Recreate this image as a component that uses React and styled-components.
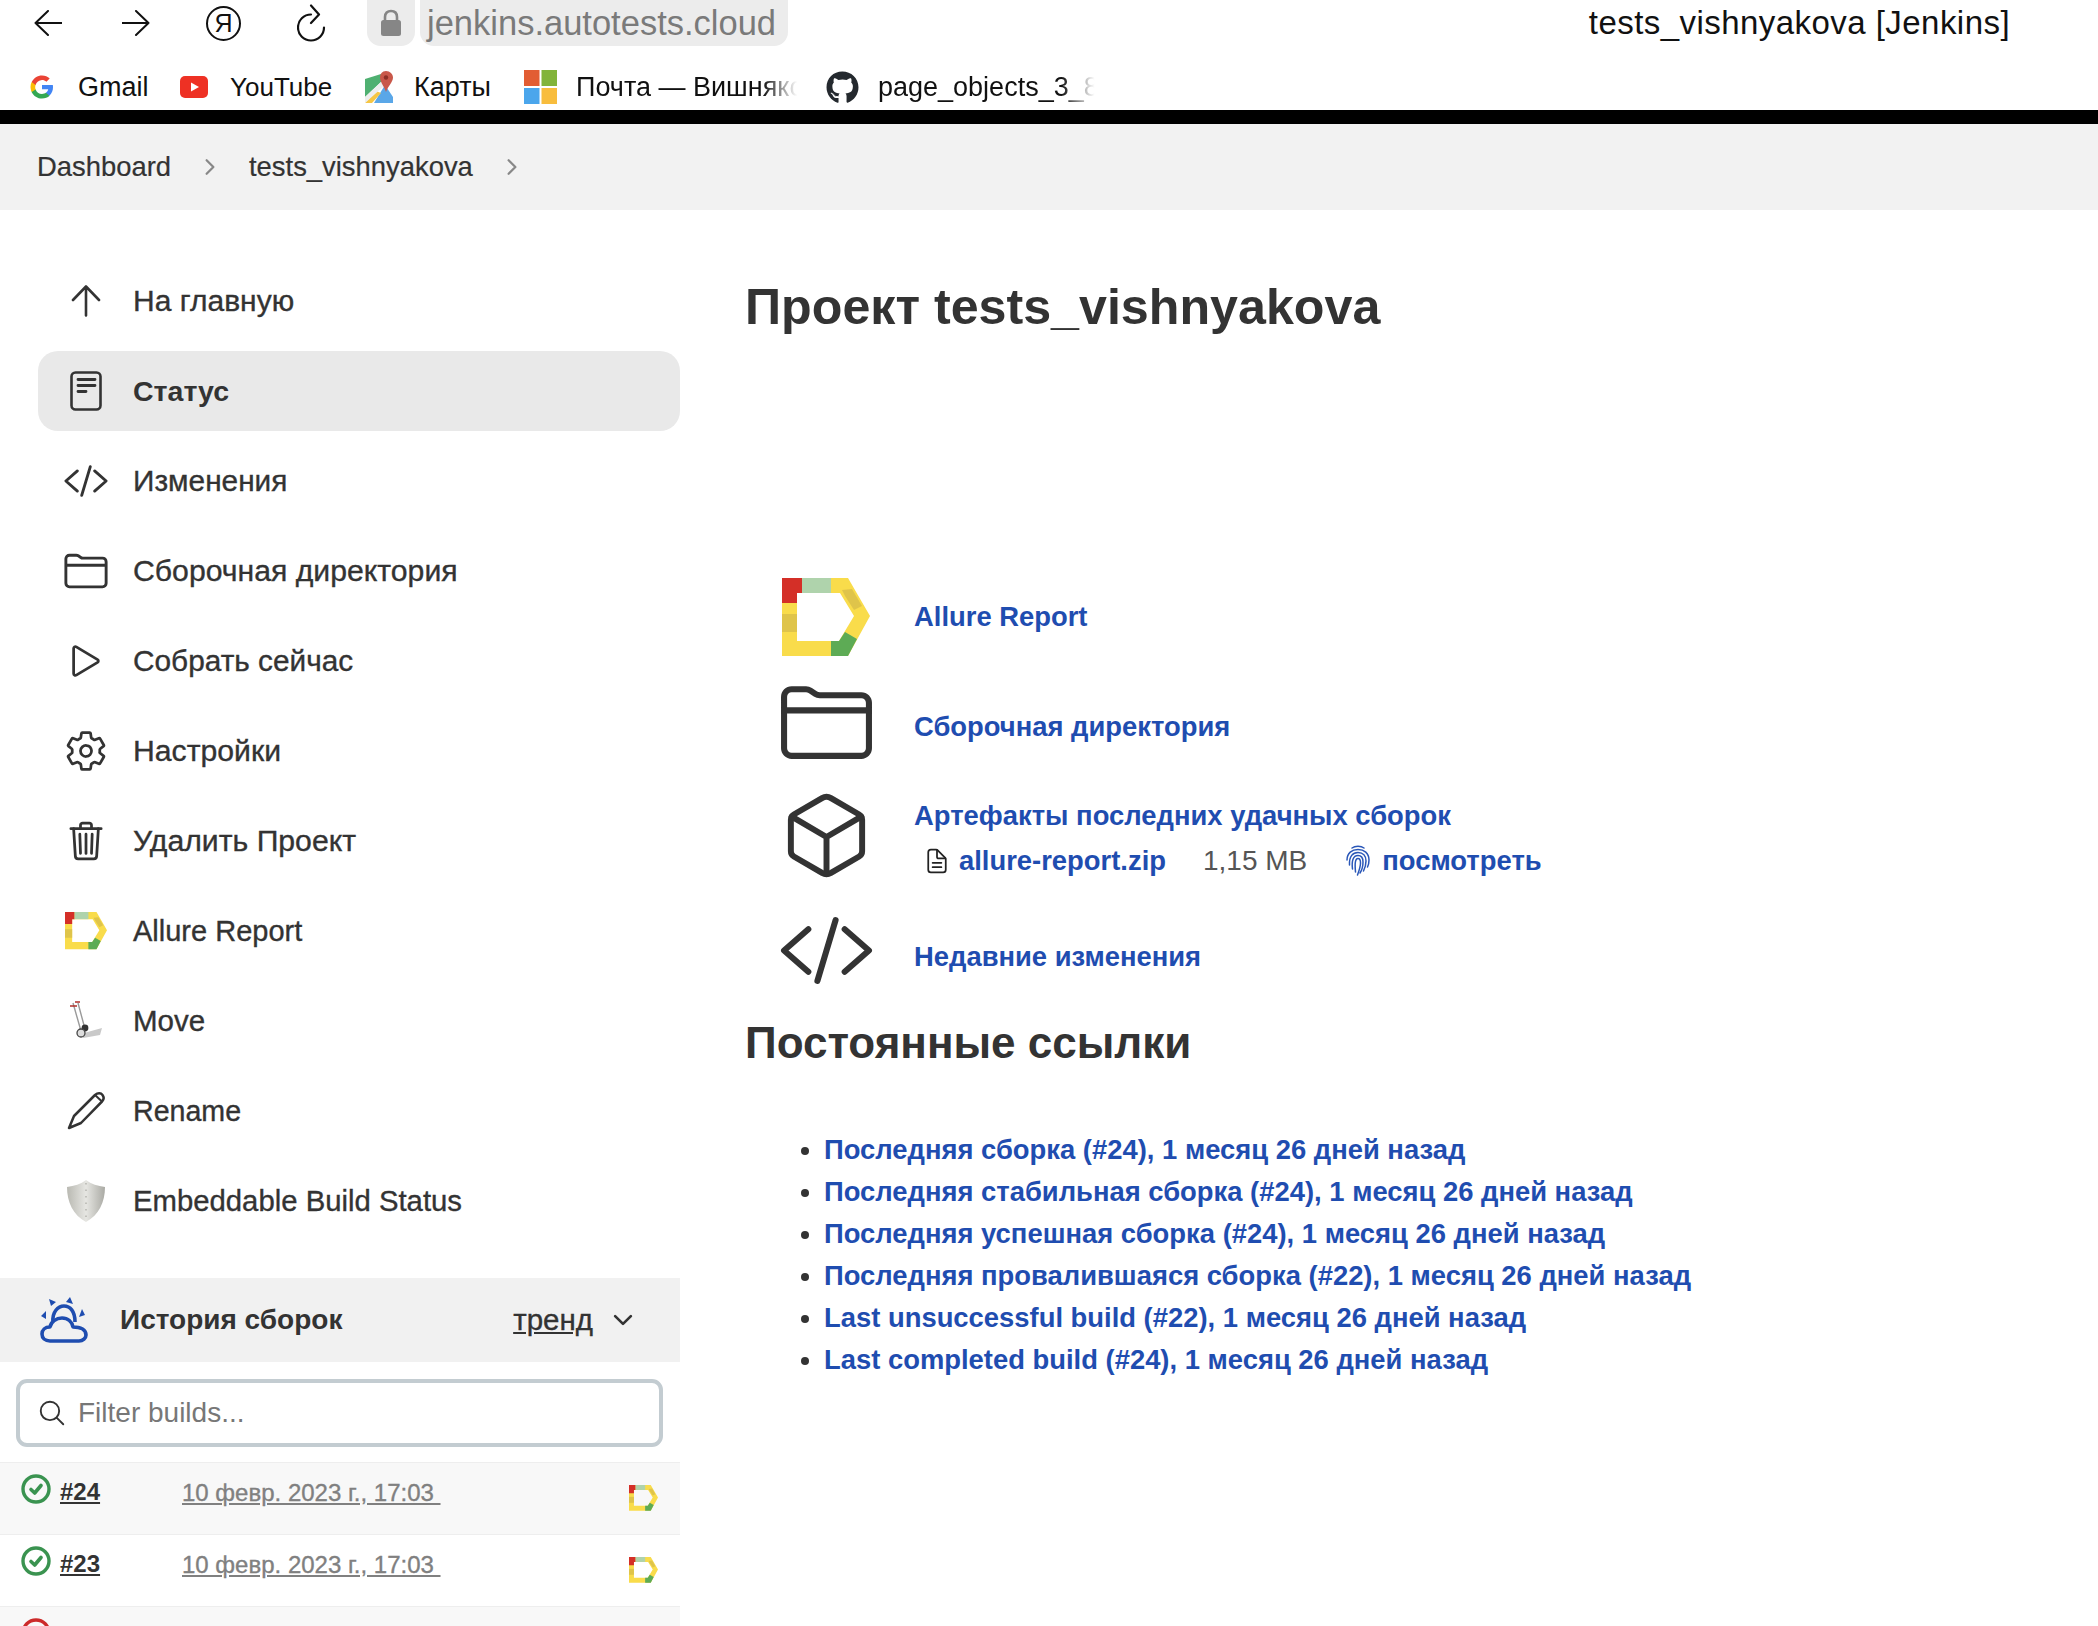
import React from 'react';
import styled, { createGlobalStyle } from 'styled-components';
import { FaGithub } from 'react-icons/fa';
import {
  IoCodeSlashOutline,
  IoFolderOutline,
  IoPlayOutline,
  IoSettingsOutline,
  IoTrashOutline,
  IoCubeOutline,
  IoDocumentTextOutline,
  IoSearchOutline,
  IoChevronDownOutline,
  IoChevronForwardOutline,
} from 'react-icons/io5';

const GlobalStyle = createGlobalStyle`
  html, body { margin: 0; padding: 0; background: #fff; }
  body { font-family: "Liberation Sans", Arial, sans-serif; color: #333; }
  * { box-sizing: border-box; }
`;

const Page = styled.div`
  width: 2098px;
  height: 1626px;
  overflow: hidden;
`;

const Toolbar = styled.div`
  display: flex;
  align-items: center;
  height: 46px;
  padding: 0 88px 0 34px;
`;

const ToolIcon = styled.div`
  display: flex;
  align-items: center;
  justify-content: center;
  width: ${(p) => p.$w || 28}px;
  margin-left: ${(p) => p.$ml || 0}px;
  color: #111;
  flex: none;
`;

const YandexRing = styled.div`
  width: 35px;
  height: 35px;
  margin-left: 56px;
  border: 2px solid #111;
  border-radius: 50%;
  display: flex;
  align-items: center;
  justify-content: center;
  font-size: 25px;
  color: #111;
  flex: none;
`;

const LockPill = styled.div`
  width: 48px;
  height: 46px;
  margin-left: 40px;
  background: #ececec;
  border-radius: 0 0 14px 14px;
  display: flex;
  align-items: center;
  justify-content: center;
  flex: none;
`;

const UrlPill = styled.div`
  width: 368px;
  height: 46px;
  margin-left: 5px;
  background: #ececec;
  border-radius: 0 0 14px 14px;
  padding-left: 7px;
  font-size: 34.5px;
  line-height: 46px;
  color: #7a7a7a;
  flex: none;
  white-space: nowrap;
`;

const PageTitle = styled.div`
  margin-left: auto;
  font-size: 33px;
  letter-spacing: 0.45px;
  color: #111;
  white-space: nowrap;
`;

const Bookmarks = styled.div`
  display: flex;
  align-items: center;
  height: 48px;
  margin-top: 17px;
  margin-bottom: -1px;
  padding-left: 30px;
`;

const Bookmark = styled.div`
  display: flex;
  align-items: center;
  flex: none;
  width: ${(p) => p.$w}px;
`;

const BookmarkIcon = styled.div`
  display: flex;
  align-items: center;
  justify-content: flex-start;
  width: ${(p) => p.$w}px;
  flex: none;
`;

const BookmarkLabel = styled.span`
  font-size: ${(p) => p.$size || 27}px;
  color: #111;
  white-space: nowrap;
  ${(p) => p.$fade && `mask-image: linear-gradient(to right, #000 ${p.$fade - 15}%, transparent ${p.$fade}%);`}
`;

const BlackBar = styled.div`
  height: 14px;
  background: #000;
`;

const Breadcrumbs = styled.nav`
  display: flex;
  align-items: center;
  height: 86px;
  padding-left: 37px;
  background: #f2f2f2;
  font-size: 27.4px;
  color: #333;
`;

const Crumb = styled.span`
  -webkit-text-stroke: 0.2px #333;
`;

const CrumbArrow = styled.span`
  display: flex;
  color: #888;
  margin: 0 27px;
`;

const Layout = styled.div`
  display: grid;
  grid-template-columns: 680px 1fr;
  column-gap: 65px;
`;

const Sidebar = styled.aside`
  padding-top: 51px;
`;

const SideNav = styled.div`
  display: flex;
  flex-direction: column;
  gap: 10px;
  padding-left: 38px;
`;

const SideItem = styled.div`
  display: flex;
  align-items: center;
  height: 80px;
  padding-left: 24px;
  border-radius: 20px;
  background: ${(p) => (p.$active ? '#e9e9e9' : 'transparent')};
  font-size: ${(p) => p.$size}px;
  font-weight: ${(p) => (p.$active ? 700 : 400)};
  color: #333;
  -webkit-text-stroke: ${(p) => (p.$active ? 0 : '0.35px #333')};
`;

const SideIcon = styled.div`
  width: 48px;
  display: flex;
  align-items: center;
  justify-content: center;
  margin-right: 23px;
  color: #333;
  flex: none;
  svg { flex: none; }
`;

const History = styled.section`
  margin-top: 37px;
`;

const HistoryHead = styled.div`
  display: flex;
  align-items: center;
  height: 84px;
  padding: 0 43px 0 40px;
  background: #f1f1f1;
`;

const HistoryTitle = styled.div`
  margin-left: 32px;
  font-size: 28px;
  font-weight: 700;
  color: #333;
`;

const Trend = styled.span`
  margin-left: auto;
  margin-right: 16px;
  font-size: 29.5px;
  text-decoration: underline;
  color: #333;
  -webkit-text-stroke: 0.35px #333;
`;

const SearchBox = styled.div`
  display: flex;
  align-items: center;
  height: 68px;
  margin: 17px 17px 15px 16px;
  padding-left: 17px;
  border: 4px solid #c3ccd1;
  border-radius: 11px;
  background: #fff;
`;

const SearchText = styled.span`
  margin-left: 11px;
  font-size: 28px;
  color: #777;
`;

const BuildRow = styled.div`
  display: flex;
  height: 72px;
  padding: 11px 22px 0 21px;
  background: ${(p) => (p.$tint ? '#f8f8f8' : '#fff')};
  border-top: 1px solid #eee;
`;

const BuildNo = styled.span`
  width: 122px;
  margin-left: 9px;
  padding-top: 4px;
  font-size: 24px;
  font-weight: 700;
  text-decoration: underline;
  color: #333;
`;

const BuildDate = styled.span`
  padding-top: 5px;
  font-size: 24px;
  color: #808080;
  text-decoration: underline;
  white-space: pre;
  -webkit-text-stroke: 0.35px #808080;
`;

const BuildLogo = styled.div`
  margin-left: auto;
  padding-top: 11px;
`;

const Content = styled.main`
  padding-top: 68px;
`;

const Title = styled.h1`
  margin: 0;
  font-size: 50.2px;
  line-height: 58px;
  font-weight: 700;
  color: #333;
`;

const Summary = styled.div`
  display: flex;
  flex-direction: column;
  margin-top: 226px;
`;

const SummaryRow = styled.div`
  display: flex;
  align-items: center;
  height: ${(p) => p.$h}px;
`;

const SummaryIcon = styled.div`
  width: 90px;
  margin: 0 43px 0 36px;
  display: flex;
  justify-content: center;
  color: #333;
  flex: none;
  svg { flex: none; }
`;

const SummaryLink = styled.a`
  display: block;
  font-size: 27.4px;
  font-weight: 700;
  color: #1f4db0;
  padding-top: ${(p) => p.$pt || 0}px;
`;

const ArtifactLine = styled.div`
  display: flex;
  align-items: center;
  margin-top: 13px;
  padding-left: 9px;
  font-size: 27.4px;
`;

const ArtifactLink = styled.a`
  font-weight: 700;
  color: #1f4db0;
`;

const ArtifactSize = styled.span`
  margin: 0 38px 0 37px;
  font-size: 28px;
  color: #555;
`;

const ArtifactIcon = styled.span`
  display: flex;
  flex: none;
  margin-right: ${(p) => p.$mr}px;
  color: ${(p) => p.$color || 'inherit'};
`;

const SubTitle = styled.h2`
  margin: 18px 0 0;
  font-size: 44px;
  line-height: 48px;
  font-weight: 700;
  color: #333;
`;

const Permalinks = styled.ul`
  margin: 62px 0 0;
  padding: 0 0 0 79px;
  font-size: 27.4px;
  line-height: 42px;
  color: #333;
`;

const PermaLink = styled.a`
  font-weight: 700;
  color: #1f4db0;
`;

const AllureLogo = ({ size = 42 }) => (
  <svg width={size} height={size * 78 / 88} viewBox="0 0 88 78">
    <path fill="#f9dc4b" fillRule="evenodd" d="M0 0H66L88 38L66 78H0ZM15 15V63H57L72 38L58 15Z" />
    <path fill="#d42f27" d="M0 0H20V15H15V25H0Z" />
    <path fill="#afd3ac" d="M20 0H49V15H20Z" />
    <path fill="#dfc44a" d="M0 36H15V54H0Z" />
    <path fill="#dfc44a" d="M60 12L70 11L80 28L72 32L63 18Z" />
    <path fill="#5dab55" d="M49 63H57L63 54L75 61L66 78H49Z" />
  </svg>
);

const BackArrow = ({ flip }) => (
  <svg width="28" height="26" viewBox="0 0 28 26" fill="none" stroke="#111" strokeWidth="2" strokeLinecap="round" strokeLinejoin="round" transform={flip ? 'scale(-1 1)' : undefined}>
    <path d="M27.500 13H1.500M14 1L1.500 13L14 25" />
  </svg>
);

const ReloadIcon = () => (
  <svg width="30" height="38" viewBox="0 0 30 38" fill="none" stroke="#111" strokeWidth="2.200" strokeLinecap="round" strokeLinejoin="round">
    <path d="M14 10.500A13 13 0 1 0 27 23.500" />
    <path d="M14 1.500L22 10.500L14 19" />
  </svg>
);

const UpArrow = () => (
  <svg width="30" height="32" viewBox="0 0 30 32" fill="none" stroke="#333" strokeWidth="2.600" strokeLinecap="round" strokeLinejoin="round">
    <path d="M15 30.500V2M2 15L15 1.500L28 15" />
  </svg>
);

const StatusIcon = () => (
  <svg width="32" height="40" viewBox="0 0 32 40" fill="none" stroke="#333" strokeWidth="2.600" strokeLinecap="round">
    <rect x="1.500" y="1.500" width="29" height="37" rx="4" />
    <path d="M8 8.500H25M8 14.500H25M8 20.500H16" strokeWidth="2.800" />
  </svg>
);

const PencilIcon = () => (
  <svg width="38" height="38" viewBox="0 0 38 38" fill="none" stroke="#333" strokeWidth="2.500" strokeLinejoin="round">
    <path d="M2 36L7 24L28 3C31 0.500 34 1 35.500 3C37 5 37 7.500 35 9.500L14 31Z" />
    <path d="M28 3L35 9.500" strokeWidth="2" />
  </svg>
);

const MoveIcon = () => (
  <svg width="34" height="40" viewBox="0 0 34 40" fill="none">
    <path d="M4 2L12 30M9 2L16 28" stroke="#9a9a9a" strokeWidth="1.400" />
    <path d="M1 5H8M6 1H11" stroke="#b0302a" strokeWidth="1.300" />
    <path d="M15 32L33 27L31 34L14 37Z" fill="#c9c9c9" />
    <circle cx="16" cy="27" r="3.400" fill="#333" />
    <circle cx="12" cy="32" r="4" fill="#ddd" stroke="#444" strokeWidth="1.300" />
  </svg>
);

const ShieldIcon = () => (
  <svg width="38" height="42" viewBox="0 0 38 42">
    <defs>
      <linearGradient id="shieldFill" x1="0" x2="1" y1="0" y2="0">
        <stop offset="0" stopColor="#b9b9b2" />
        <stop offset="0.5" stopColor="#e6e6e2" />
        <stop offset="1" stopColor="#aaaaa4" />
      </linearGradient>
    </defs>
    <path fill="url(#shieldFill)" d="M19 0C24 4 31 6 38 7C38 22 32 35 19 42C6 35 0 22 0 7C7 6 14 4 19 0Z" />
    <path stroke="#a8a8a2" strokeWidth="1.200" strokeDasharray="1.500 5" d="M19 3V38" />
  </svg>
);

const WeatherIcon = () => (
  <svg width="48" height="46" viewBox="0 0 48 46" fill="none" stroke="#1f4db0" strokeWidth="3.600" strokeLinejoin="round">
    <path d="M13 25C12 15 18 9 24 9C30 9 35 14 35 25" />
    <path d="M10 44C5 44 2 41 2 37C2 33 5 30 10 30C11 25 16 21 22 21C28 21 32 25 33 30C41 30 46 33 46 38C46 41 43 44 39 44Z" />
    <path fill="#1f4db0" strokeWidth="0" d="M9 2L16 5L11 9ZM30 0L33 7L26 5ZM1 19L6 14L6 22ZM42 12L45 18L39 20Z" />
  </svg>
);

const GoodBall = () => (
  <svg width="30" height="30" viewBox="0 0 30 30" fill="none">
    <circle cx="15" cy="15" r="13" stroke="#3a9350" strokeWidth="3.400" />
    <path d="M10 15.500L13.700 19L20 11.500" stroke="#3a9350" strokeWidth="3.600" strokeLinecap="round" strokeLinejoin="round" />
  </svg>
);

const BadBall = () => (
  <svg width="30" height="30" viewBox="0 0 30 30" fill="none">
    <circle cx="15" cy="15" r="13" stroke="#cc2a2a" strokeWidth="3.400" />
  </svg>
);

const FingerprintIcon = () => (
  <svg width="26" height="32" viewBox="0 0 26 32" fill="none" stroke="#2a57b8" strokeWidth="1.500" strokeLinecap="round">
    <path d="M7 3C10 0.800 16 0.800 19 3" />
    <path d="M2 15C2 8 7 4.500 13 4.500C19 4.500 24 8 24 15C24 18 23.500 20 22.500 22" />
    <path d="M4.500 20C4 11 8 7.500 13 7.500C18 7.500 21 11 21 16C21 20 20 23 18.500 26" />
    <path d="M7.500 24C6.500 16 8 10.500 13 10.500C16.500 10.500 18 13 18 17C18 21 17 25 15 28" />
    <path d="M10.500 27C10 21 9.500 13.500 13 13.500C15 13.500 15.500 15.500 15.500 18C15.500 22 14 26 12.500 30" />
  </svg>
);

const GoogleIcon = () => (
  <svg width="24" height="24" viewBox="0 0 48 48">
    <path fill="#4285f4" d="M46 24.500c0-1.600-.1-3.100-.4-4.500H24v8.500h12.400c-.5 2.900-2.100 5.300-4.600 6.900v5.700h7.400C43.500 36.700 46 31.100 46 24.500z" />
    <path fill="#34a853" d="M24 47c6.200 0 11.400-2 15.200-5.600l-7.400-5.700c-2 1.400-4.700 2.200-7.800 2.200-6 0-11.100-4-12.900-9.500H3.400v5.900C7.200 41.800 15 47 24 47z" />
    <path fill="#fbbc05" d="M11.100 28.900c-.5-1.400-.7-2.900-.7-4.400s.3-3 .7-4.400v-5.900H3.400C1.900 17.200 1 20.500 1 24s.9 6.800 2.400 9.800z" />
    <path fill="#ea4335" d="M24 10.100c3.400 0 6.400 1.200 8.800 3.400l6.600-6.600C35.400 3.200 30.200 1 24 1 15 1 7.200 6.200 3.400 14.200l7.700 5.900c1.800-5.500 6.900-10 12.900-10z" />
  </svg>
);

const YoutubeIcon = () => (
  <svg width="28" height="22" viewBox="0 0 28 22">
    <rect width="28" height="22" rx="5" fill="#ee3124" />
    <path d="M11 6.500L19 11L11 15.500Z" fill="#fff" />
  </svg>
);

const MapsIcon = () => (
  <svg width="28" height="32" viewBox="0 0 28 32">
    <path fill="#5aa7e8" d="M9 32L20 14L28 26V32Z" />
    <path fill="#f6c644" d="M0 32L11 20L16 22L7 32Z" />
    <path fill="#4fb071" d="M0 8L16 3V11L0 26Z" />
    <path fill="#eee" d="M0 26L16 11L19 15L0 32Z" />
    <path fill="#c9584a" d="M21 0C25 0 28 3 28 6.500C28 11 23 15 21 21C19 15 15 11 15 6.500C15 3 17 0 21 0Z" />
    <circle cx="21" cy="6.500" r="2.200" fill="#8c2f26" />
  </svg>
);

const MailIcon = () => (
  <svg width="33" height="34" viewBox="0 0 33 34">
    <rect width="15.500" height="16" fill="#e25d33" />
    <rect x="17.500" width="15.500" height="16" fill="#82b43a" />
    <rect y="18" width="15.500" height="16" fill="#4ba6ec" />
    <rect x="17.500" y="18" width="15.500" height="16" fill="#f8bd3d" />
  </svg>
);

const sideItems = [
  { label: 'На главную', size: 30, icon: <UpArrow /> },
  { label: 'Статус', size: 28.5, icon: <StatusIcon />, active: true },
  { label: 'Изменения', size: 29.8, icon: <IoCodeSlashOutline size={46} /> },
  { label: 'Сборочная директория', size: 30.2, icon: <IoFolderOutline size={46} /> },
  { label: 'Собрать сейчас', size: 29.8, icon: <IoPlayOutline size={44} /> },
  { label: 'Настройки', size: 30.2, icon: <IoSettingsOutline size={44} /> },
  { label: 'Удалить Проект', size: 30.2, icon: <IoTrashOutline size={44} /> },
  { label: 'Allure Report', size: 29, icon: <AllureLogo /> },
  { label: 'Move', size: 29.5, icon: <MoveIcon /> },
  { label: 'Rename', size: 28.6, icon: <PencilIcon /> },
  { label: 'Embeddable Build Status', size: 29.3, icon: <ShieldIcon /> },
];

const permalinks = [
  'Последняя сборка (#24), 1 месяц 26 дней назад',
  'Последняя стабильная сборка (#24), 1 месяц 26 дней назад',
  'Последняя успешная сборка (#24), 1 месяц 26 дней назад',
  'Последняя провалившаяся сборка (#22), 1 месяц 26 дней назад',
  'Last unsuccessful build (#22), 1 месяц 26 дней назад',
  'Last completed build (#24), 1 месяц 26 дней назад',
];

const builds = [
  { no: '#24', date: '10 февр. 2023 г., 17:03 ', tint: true },
  { no: '#23', date: '10 февр. 2023 г., 17:03 ' },
];

const App = () => (
  <Page>
    <GlobalStyle />
    <Toolbar>
      <ToolIcon><BackArrow /></ToolIcon>
      <ToolIcon $ml={60}><BackArrow flip /></ToolIcon>
      <YandexRing>Я</YandexRing>
      <ToolIcon $w={30} $ml={56}><ReloadIcon /></ToolIcon>
      <LockPill>
        <svg width="20" height="28" viewBox="0 0 20 28">
          <path d="M4 13V8C4 4 6.500 2 10 2C13.500 2 16 4 16 8V13" fill="none" stroke="#868686" strokeWidth="2.600" />
          <rect y="11" width="20" height="16" rx="2.500" fill="#868686" />
        </svg>
      </LockPill>
      <UrlPill>jenkins.autotests.cloud</UrlPill>
      <PageTitle>tests_vishnyakova [Jenkins]</PageTitle>
    </Toolbar>

    <Bookmarks>
      <Bookmark $w={150}><BookmarkIcon $w={48}><GoogleIcon /></BookmarkIcon><BookmarkLabel>Gmail</BookmarkLabel></Bookmark>
      <Bookmark $w={185}><BookmarkIcon $w={50}><YoutubeIcon /></BookmarkIcon><BookmarkLabel $size={26}>YouTube</BookmarkLabel></Bookmark>
      <Bookmark $w={159}><BookmarkIcon $w={49}><MapsIcon /></BookmarkIcon><BookmarkLabel>Карты</BookmarkLabel></Bookmark>
      <Bookmark $w={302}><BookmarkIcon $w={52}><MailIcon /></BookmarkIcon><BookmarkLabel $fade={97}>Почта — Вишняко</BookmarkLabel></Bookmark>
      <Bookmark $w={270}><BookmarkIcon $w={52}><FaGithub size={33} color="#24292e" /></BookmarkIcon><BookmarkLabel $fade={98}>page_objects_3_8</BookmarkLabel></Bookmark>
    </Bookmarks>
    <BlackBar />

    <Breadcrumbs>
      <Crumb>Dashboard</Crumb>
      <CrumbArrow><IoChevronForwardOutline size={24} /></CrumbArrow>
      <Crumb>tests_vishnyakova</Crumb>
      <CrumbArrow><IoChevronForwardOutline size={24} /></CrumbArrow>
    </Breadcrumbs>

    <Layout>
      <Sidebar>
        <SideNav>
          {sideItems.map((item) => (
            <SideItem key={item.label} $active={item.active} $size={item.size}>
              <SideIcon>{item.icon}</SideIcon>
              {item.label}
            </SideItem>
          ))}
        </SideNav>
        <History>
          <HistoryHead>
            <WeatherIcon />
            <HistoryTitle>История сборок</HistoryTitle>
            <Trend>тренд</Trend>
            <IoChevronDownOutline size={28} color="#333" />
          </HistoryHead>
          <SearchBox>
            <IoSearchOutline size={30} color="#333" />
            <SearchText>Filter builds...</SearchText>
          </SearchBox>
          {builds.map((b) => (
            <BuildRow key={b.no} $tint={b.tint}>
              <GoodBall />
              <BuildNo>{b.no}</BuildNo>
              <BuildDate>{b.date}</BuildDate>
              <BuildLogo><AllureLogo size={29} /></BuildLogo>
            </BuildRow>
          ))}
          <BuildRow $tint>
            <BadBall />
          </BuildRow>
        </History>
      </Sidebar>

      <Content>
        <Title>Проект tests_vishnyakova</Title>
        <Summary>
          <SummaryRow $h={110}>
            <SummaryIcon><AllureLogo size={88} /></SummaryIcon>
            <SummaryLink>Allure Report</SummaryLink>
          </SummaryRow>
          <SummaryRow $h={100}>
            <SummaryIcon><IoFolderOutline size={97} /></SummaryIcon>
            <SummaryLink $pt={10}>Сборочная директория</SummaryLink>
          </SummaryRow>
          <SummaryRow $h={127}>
            <SummaryIcon><IoCubeOutline size={95} /></SummaryIcon>
            <div>
              <SummaryLink $pt={5}>Артефакты последних удачных сборок</SummaryLink>
              <ArtifactLine>
                <ArtifactIcon $mr={8} $color="#222"><IoDocumentTextOutline size={28} /></ArtifactIcon>
                <ArtifactLink>allure-report.zip</ArtifactLink>
                <ArtifactSize>1,15 MB</ArtifactSize>
                <ArtifactIcon $mr={11}><FingerprintIcon /></ArtifactIcon>
                <ArtifactLink>посмотреть</ArtifactLink>
              </ArtifactLine>
            </div>
          </SummaryRow>
          <SummaryRow $h={102}>
            <SummaryIcon><IoCodeSlashOutline size={97} /></SummaryIcon>
            <SummaryLink $pt={13}>Недавние изменения</SummaryLink>
          </SummaryRow>
        </Summary>
        <SubTitle>Постоянные ссылки</SubTitle>
        <Permalinks>
          {permalinks.map((text) => (
            <li key={text}><PermaLink>{text}</PermaLink></li>
          ))}
        </Permalinks>
      </Content>
    </Layout>
  </Page>
);

export default App;
